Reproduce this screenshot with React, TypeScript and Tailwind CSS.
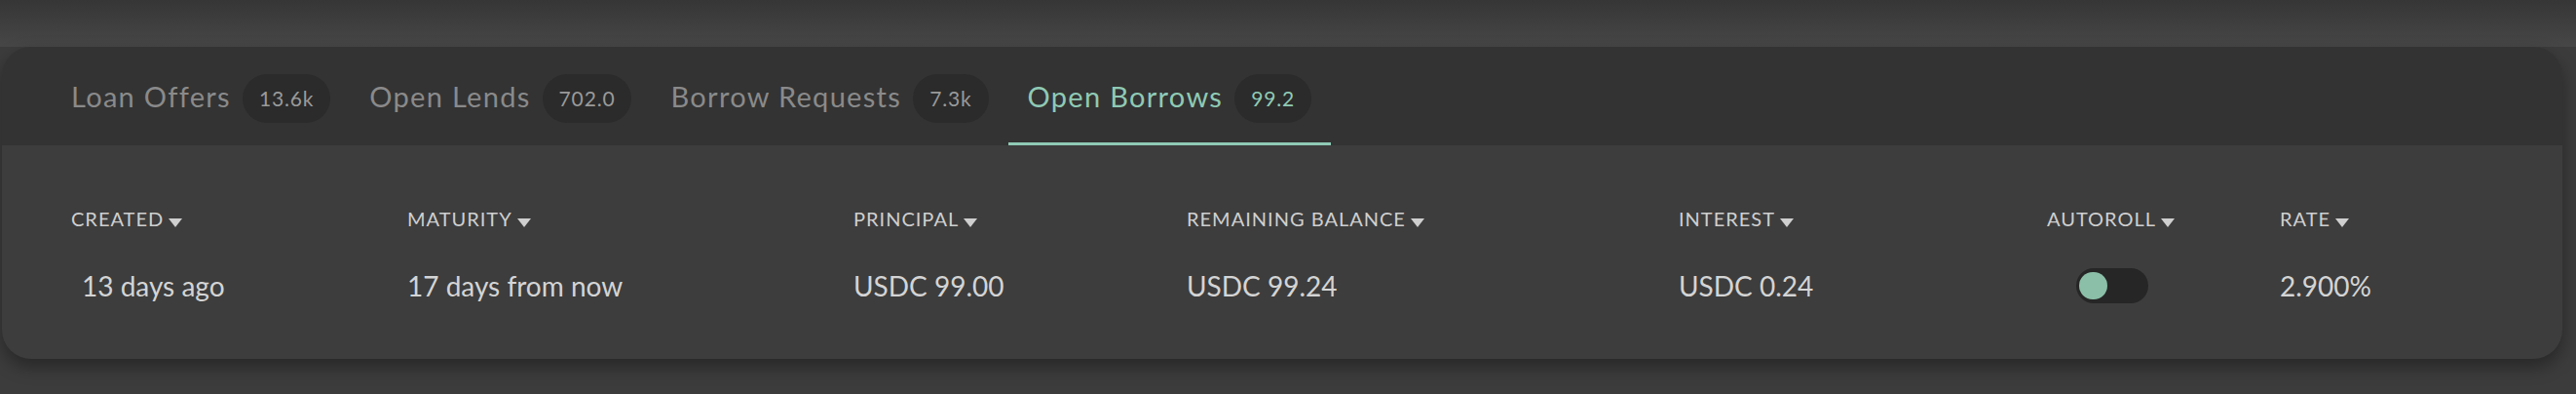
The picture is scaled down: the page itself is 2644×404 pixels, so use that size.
import { useState } from "react";

const tabs = [
  { label: "Loan Offers", count: "13.6k" },
  { label: "Open Lends", count: "702.0" },
  { label: "Borrow Requests", count: "7.3k" },
  { label: "Open Borrows", count: "99.2" },
];

const columns = ["Created", "Maturity", "Principal", "Remaining Balance", "Interest", "Autoroll", "Rate"];

function SortArrow() {
  return (
    <svg width="14" height="9" viewBox="0 0 14 9" className="ml-[5px] mb-[3px] shrink-0">
      <path d="M0 0 L14 0 L7 9 Z" fill="#cfcfcf" />
    </svg>
  );
}

function Toggle() {
  return (
    <div className="w-[74px] h-[36px] rounded-full bg-[#262626] flex items-center px-[3px]">
      <div className="w-[29px] h-[28px] rounded-full bg-[#8bbfa8]" />
    </div>
  );
}

function App() {
  const [active, setActive] = useState(3);

  return (
    <div
      className="w-[2644px] h-[404px] bg-[#3c3c3c] overflow-hidden"
      style={{ fontFamily: "Lato, 'Open Sans', sans-serif" }}
    >
      <div className="h-[48px] bg-gradient-to-b from-[#363636] to-[#474747]" />
      <div className="pl-[2px]">
        <section className="w-[2628px] rounded-[30px] overflow-hidden bg-[#3d3d3d] shadow-[0_8px_18px_rgba(0,0,0,0.35)]">
          <nav className="h-[101px] bg-[#333333] flex items-stretch pl-[51px]">
            {tabs.map((tab, i) => (
              <button
                key={tab.label}
                onClick={() => setActive(i)}
                className={
                  "flex items-center px-5 pt-[3px] border-b-[3px] " +
                  (i === active ? "border-[#8fcab5] text-[#8fcab5]" : "border-transparent text-[#8a8a8a]")
                }
              >
                <span className="text-[29px] tracking-[0.045em] leading-none">{tab.label}</span>
                <span
                  className={
                    "ml-[12px] mt-[4px] h-[50px] px-[17px] rounded-full bg-[#2b2b2b] flex items-center text-[21px] tracking-[0.04em] " +
                    (i === active ? "text-[#8fcab5]" : "text-[#9a9a9a]")
                  }
                >
                  {tab.count}
                </span>
              </button>
            ))}
          </nav>

          <div className="pl-[71px] pt-[63px] pb-[60px]">
            <div className="grid grid-cols-[345px_458px_342px_505px_378px_239px_1fr]">
              {columns.map((c) => (
                <div key={c} className="flex items-end h-[24px] text-[20px] uppercase tracking-[0.05em] text-[#cfcfcf] leading-[24px]">
                  {c}
                  <SortArrow />
                </div>
              ))}
            </div>
            <div className="grid grid-cols-[345px_458px_342px_505px_378px_239px_1fr] mt-[36px] items-center h-[36px] text-[28px] text-[#d4d4d4]">
              <div className="pl-[11px]">13 days ago</div>
              <div>17 days from now</div>
              <div>USDC 99.00</div>
              <div>USDC 99.24</div>
              <div>USDC 0.24</div>
              <div className="pl-[30px]">
                <Toggle />
              </div>
              <div>2.900%</div>
            </div>
          </div>
        </section>
      </div>
    </div>
  );
}

export default App;
